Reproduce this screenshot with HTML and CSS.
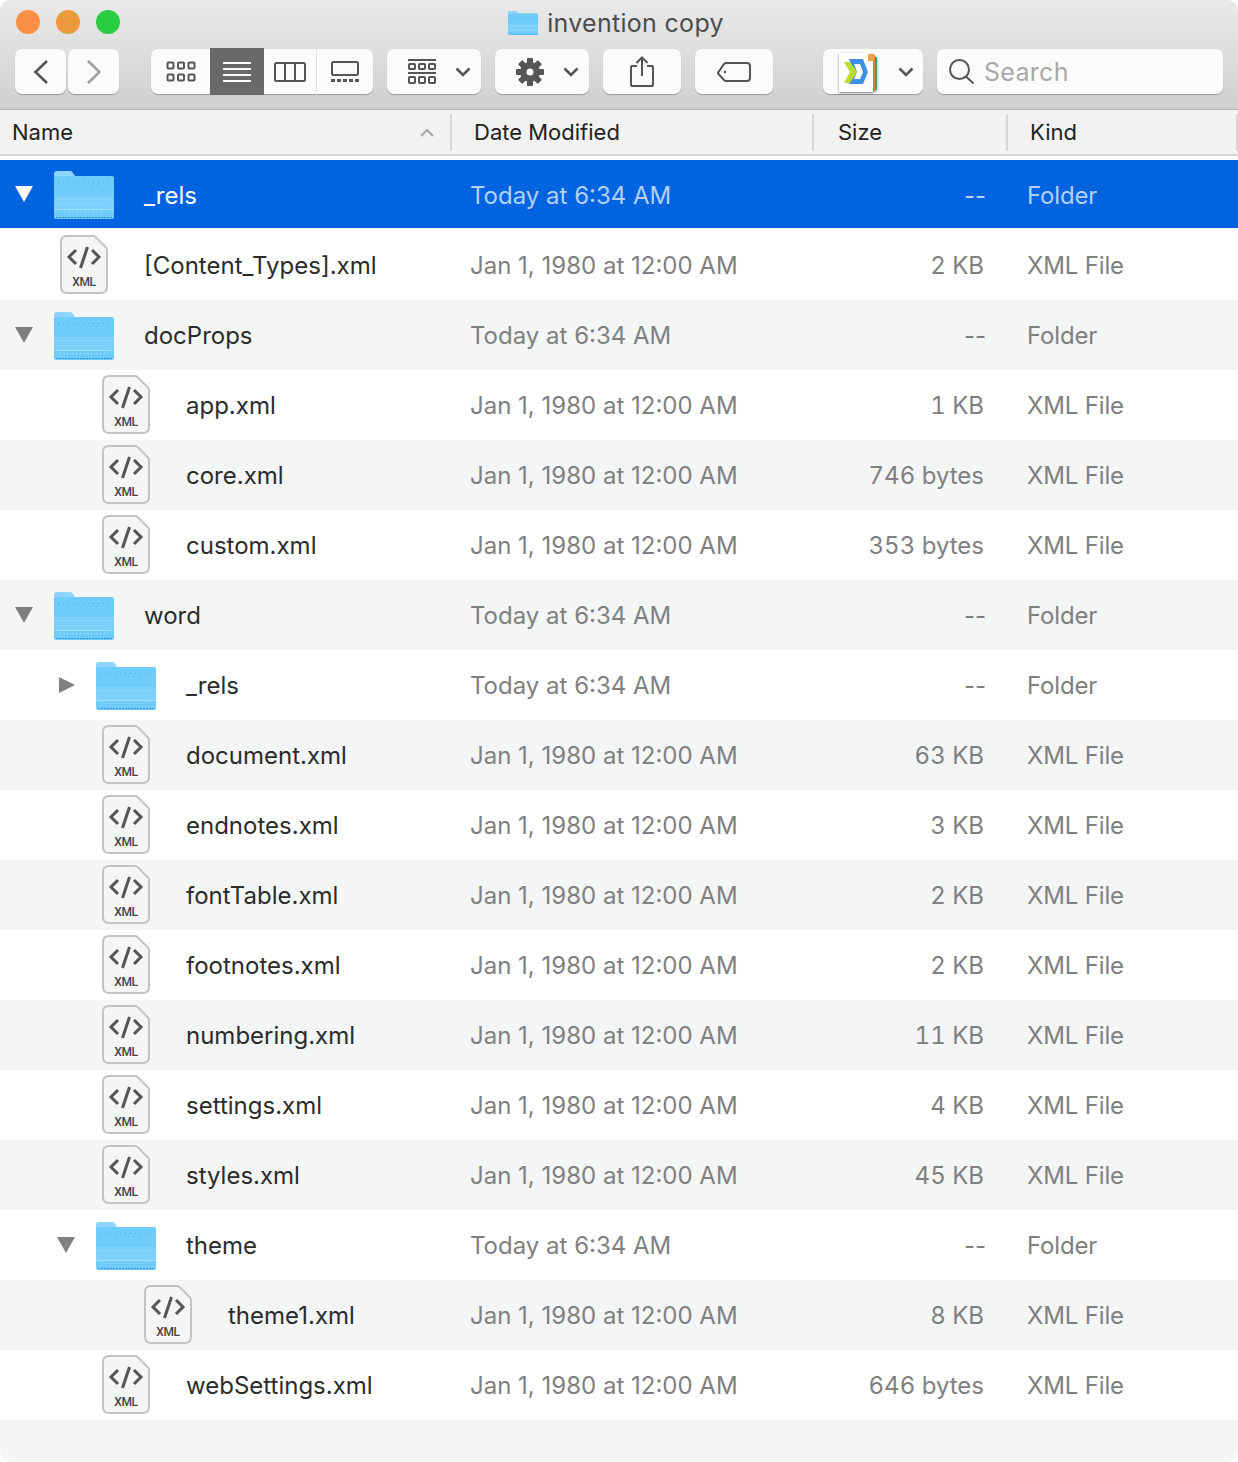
FILE: index.html
```html
<!DOCTYPE html>
<html lang="en">
<head>
  <meta charset="UTF-8">
  <title>invention copy</title>
  <link rel="stylesheet" href="styles.css">
</head>
<body>
  <!-- shared icon shapes -->
  <svg class="defs" width="0" height="0">
    <defs>
      <symbol id="folder" viewBox="0 0 60 48">
        <path d="M0 3q0-3 3-3h13q2 0 3 2l2 3h36q3 0 3 3v37q0 3-3 3H3q-3 0-3-3z" fill="#8dd5fb"/>
        <path d="M0 8q0-3 3-3h54q3 0 3 3v37q0 3-3 3H3q-3 0-3-3z" fill="#6ecbfa"/>
        <rect y="25" width="60" height="13" fill="#7dd0fb"/>
        <rect y="38" width="60" height="1" fill="#a4def9"/>
        <path d="M4 11.500h52M32 14.500h12" stroke="#3f9fec" stroke-width="1" stroke-dasharray="1 4" opacity=".7"/>
        <path d="M2 28.500h56M4 33.500h52M6 41.500h48" stroke="#a8e2fc" stroke-width="1" stroke-dasharray="1 3"/>
        <path d="M2 46.500h56" stroke="#2f93e6" stroke-width="1" stroke-dasharray="2 1"/>
      </symbol>
      <symbol id="xml" viewBox="0 0 48 59">
        <path d="M7 1h26q1.500 0 2.500 1L46 12.500q1 1 1 2.500v37q0 6-6 6H7q-6 0-6-6V7q0-6 6-6z" fill="#f5f5f5" stroke="#c3c3c3" stroke-width="2"/>
        <path d="M16 15l-7 7 7 7M32 15l7 7-7 7" fill="none" stroke="#555" stroke-width="3"/>
        <path d="M27.500 12l-7 21" fill="none" stroke="#555" stroke-width="3"/>
      </symbol>
      <symbol id="chev" viewBox="0 0 16 10">
        <path d="M1.500 1.500L8 8l6.500-6.500" fill="none" stroke="#555" stroke-width="2.600"/>
      </symbol>
    </defs>
  </svg>

  <div class="window">
    <header class="chrome">
      <div class="titlebar">
        <div class="lights">
          <span class="light orange"></span>
          <span class="light amber"></span>
          <span class="light green"></span>
        </div>
        <div class="title">
          <svg class="title-icon"><use href="#folder"/></svg>
          <span>invention copy</span>
        </div>
      </div>

      <div class="toolbar">
        <div class="nav">
          <div class="btn nav-btn">
            <svg width="16" height="24" viewBox="0 0 16 24"><path d="M14 1L2.500 12 14 23" fill="none" stroke="#555" stroke-width="2.600"/></svg>
          </div>
          <div class="btn nav-btn">
            <svg width="16" height="24" viewBox="0 0 16 24"><path d="M2 1l11.500 11L2 23" fill="none" stroke="#a0a0a0" stroke-width="2.600"/></svg>
          </div>
        </div>

        <div class="btn views">
          <div class="view view-icon">
            <svg width="30" height="22" viewBox="0 0 30 22" fill="none" stroke="#555" stroke-width="2">
              <rect x="1.500" y="1.500" width="6" height="6" rx="1"/><rect x="12" y="1.500" width="6" height="6" rx="1"/><rect x="22.500" y="1.500" width="6" height="6" rx="1"/>
              <rect x="1.500" y="13.500" width="6" height="6" rx="1"/><rect x="12" y="13.500" width="6" height="6" rx="1"/><rect x="22.500" y="13.500" width="6" height="6" rx="1"/>
            </svg>
          </div>
          <div class="view view-list">
            <svg width="28" height="20" viewBox="0 0 28 20" fill="none" stroke="#fff" stroke-width="2"><path d="M0 1h28M0 7h28M0 13h28M0 19h28"/></svg>
          </div>
          <div class="view view-col">
            <svg width="32" height="20" viewBox="0 0 32 20" fill="none" stroke="#555" stroke-width="2"><rect x="1" y="1" width="30" height="18" rx="1.500"/><path d="M11 1v18M21 1v18"/></svg>
          </div>
          <div class="view view-gal">
            <svg width="28" height="21" viewBox="0 0 28 21" fill="none" stroke="#555" stroke-width="2"><rect x="1" y="1" width="26" height="13" rx="1.500"/><path d="M0 19.500h28" stroke-width="3" stroke-dasharray="4 2"/></svg>
          </div>
        </div>

        <div class="btn drop">
          <svg width="28" height="26" viewBox="0 0 28 26" fill="none" stroke="#555" stroke-width="2">
            <path d="M0 1h28M0 14h28"/>
            <rect x="1" y="5" width="6" height="5" rx=".8"/><rect x="11" y="5" width="6" height="5" rx=".8"/><rect x="21" y="5" width="6" height="5" rx=".8"/>
            <rect x="1" y="18" width="6" height="6" rx=".8"/><rect x="11" y="18" width="6" height="6" rx=".8"/><rect x="21" y="18" width="6" height="6" rx=".8"/>
          </svg>
          <svg class="chev"><use href="#chev"/></svg>
        </div>

        <div class="btn drop">
          <svg width="28" height="28" viewBox="0 0 28 28">
            <g fill="#555">
              <rect x="11" y="0" width="6" height="28" rx="1"/>
              <rect x="11" y="0" width="6" height="28" rx="1" transform="rotate(45 14 14)"/>
              <rect x="11" y="0" width="6" height="28" rx="1" transform="rotate(90 14 14)"/>
              <rect x="11" y="0" width="6" height="28" rx="1" transform="rotate(135 14 14)"/>
              <circle cx="14" cy="14" r="10"/>
            </g>
            <circle cx="14" cy="14" r="3.500" fill="#fbfbfb"/>
          </svg>
          <svg class="chev"><use href="#chev"/></svg>
        </div>

        <div class="btn share">
          <svg width="24" height="31" viewBox="0 0 24 31" fill="none" stroke="#555" stroke-width="2">
            <path d="M7 10H2q-1 0-1 1v18q0 1 1 1h20q1 0 1-1V11q0-1-1-1h-5"/>
            <path d="M12 20V2M6.500 7L12 1.500 17.500 7"/>
          </svg>
        </div>

        <div class="btn tag">
          <svg width="34" height="20" viewBox="0 0 34 20" fill="none" stroke="#555" stroke-width="2">
            <path d="M9 1h21q3 0 3 3v12q0 3-3 3H9q-1 0-2-1l-5.500-6q-1-1 0-2L7 2q1-1 2-1z"/>
            <circle cx="8" cy="10" r="1.200" fill="#555" stroke="none"/>
          </svg>
        </div>

        <div class="btn dropbox">
          <svg class="app-icon" width="40" height="42" viewBox="0 0 40 42">
            <rect x="34" y="3" width="3" height="36" fill="#e0813a"/>
            <rect x="37" y="5" width="2" height="33" fill="#4f9e5b"/>
            <rect x="30" y="2" width="6" height="7" fill="#f0a24a"/>
            <path d="M1 1h29v8h5v31H1z" fill="#fff"/>
            <path d="M11 7h14l5 13-5 12H11l5-12z" fill="#3f8fe6"/>
            <path d="M16 12h6l3 8-3 7h-6l3-7z" fill="#fff"/>
            <path d="M6 10h6l7 10-7 11H6l6-11z" fill="#b7dc2a"/>
            <path d="M12 32h13l3-7 2-5-5 12z" fill="#1f6fd0"/>
          </svg>
          <svg class="chev"><use href="#chev"/></svg>
        </div>

        <div class="btn search">
          <svg width="26" height="25" viewBox="0 0 26 25" fill="none" stroke="#555" stroke-width="2"><circle cx="10.500" cy="10.500" r="9.500"/><path d="M17 17.500l7.500 7"/></svg>
          <span>Search</span>
        </div>
      </div>
    </header>

    <div class="columns">
      <div class="col col-name">
        <span>Name</span>
        <svg class="sort" width="14" height="9" viewBox="0 0 14 9"><path d="M1 8l6-6 6 6" fill="none" stroke="#a8a8a8" stroke-width="2.200"/></svg>
      </div>
      <div class="col col-date">Date Modified</div>
      <div class="col col-size">Size</div>
      <div class="col col-kind">Kind</div>
    </div>

    <div class="list">
      <div class="row selected lvl0">
        <div class="name"><span class="tri down"></span><svg class="folder"><use href="#folder"/></svg><span class="label">_rels</span></div>
        <div>Today at 6:34 AM</div><div class="size dash">--</div><div class="kind">Folder</div>
      </div>
      <div class="row lvl0">
        <div class="name"><span class="tri"></span><div class="doc"><svg><use href="#xml"/></svg><span>XML</span></div><span class="label">[Content_Types].xml</span></div>
        <div>Jan 1, 1980 at 12:00 AM</div><div class="size">2 KB</div><div class="kind">XML File</div>
      </div>
      <div class="row lvl0">
        <div class="name"><span class="tri down"></span><svg class="folder"><use href="#folder"/></svg><span class="label">docProps</span></div>
        <div>Today at 6:34 AM</div><div class="size dash">--</div><div class="kind">Folder</div>
      </div>
      <div class="row lvl1">
        <div class="name"><span class="tri"></span><div class="doc"><svg><use href="#xml"/></svg><span>XML</span></div><span class="label">app.xml</span></div>
        <div>Jan 1, 1980 at 12:00 AM</div><div class="size">1 KB</div><div class="kind">XML File</div>
      </div>
      <div class="row lvl1">
        <div class="name"><span class="tri"></span><div class="doc"><svg><use href="#xml"/></svg><span>XML</span></div><span class="label">core.xml</span></div>
        <div>Jan 1, 1980 at 12:00 AM</div><div class="size">746 bytes</div><div class="kind">XML File</div>
      </div>
      <div class="row lvl1">
        <div class="name"><span class="tri"></span><div class="doc"><svg><use href="#xml"/></svg><span>XML</span></div><span class="label">custom.xml</span></div>
        <div>Jan 1, 1980 at 12:00 AM</div><div class="size">353 bytes</div><div class="kind">XML File</div>
      </div>
      <div class="row lvl0">
        <div class="name"><span class="tri down"></span><svg class="folder"><use href="#folder"/></svg><span class="label">word</span></div>
        <div>Today at 6:34 AM</div><div class="size dash">--</div><div class="kind">Folder</div>
      </div>
      <div class="row lvl1">
        <div class="name"><span class="tri right"></span><svg class="folder"><use href="#folder"/></svg><span class="label">_rels</span></div>
        <div>Today at 6:34 AM</div><div class="size dash">--</div><div class="kind">Folder</div>
      </div>
      <div class="row lvl1">
        <div class="name"><span class="tri"></span><div class="doc"><svg><use href="#xml"/></svg><span>XML</span></div><span class="label">document.xml</span></div>
        <div>Jan 1, 1980 at 12:00 AM</div><div class="size">63 KB</div><div class="kind">XML File</div>
      </div>
      <div class="row lvl1">
        <div class="name"><span class="tri"></span><div class="doc"><svg><use href="#xml"/></svg><span>XML</span></div><span class="label">endnotes.xml</span></div>
        <div>Jan 1, 1980 at 12:00 AM</div><div class="size">3 KB</div><div class="kind">XML File</div>
      </div>
      <div class="row lvl1">
        <div class="name"><span class="tri"></span><div class="doc"><svg><use href="#xml"/></svg><span>XML</span></div><span class="label">fontTable.xml</span></div>
        <div>Jan 1, 1980 at 12:00 AM</div><div class="size">2 KB</div><div class="kind">XML File</div>
      </div>
      <div class="row lvl1">
        <div class="name"><span class="tri"></span><div class="doc"><svg><use href="#xml"/></svg><span>XML</span></div><span class="label">footnotes.xml</span></div>
        <div>Jan 1, 1980 at 12:00 AM</div><div class="size">2 KB</div><div class="kind">XML File</div>
      </div>
      <div class="row lvl1">
        <div class="name"><span class="tri"></span><div class="doc"><svg><use href="#xml"/></svg><span>XML</span></div><span class="label">numbering.xml</span></div>
        <div>Jan 1, 1980 at 12:00 AM</div><div class="size">11 KB</div><div class="kind">XML File</div>
      </div>
      <div class="row lvl1">
        <div class="name"><span class="tri"></span><div class="doc"><svg><use href="#xml"/></svg><span>XML</span></div><span class="label">settings.xml</span></div>
        <div>Jan 1, 1980 at 12:00 AM</div><div class="size">4 KB</div><div class="kind">XML File</div>
      </div>
      <div class="row lvl1">
        <div class="name"><span class="tri"></span><div class="doc"><svg><use href="#xml"/></svg><span>XML</span></div><span class="label">styles.xml</span></div>
        <div>Jan 1, 1980 at 12:00 AM</div><div class="size">45 KB</div><div class="kind">XML File</div>
      </div>
      <div class="row lvl1">
        <div class="name"><span class="tri down"></span><svg class="folder"><use href="#folder"/></svg><span class="label">theme</span></div>
        <div>Today at 6:34 AM</div><div class="size dash">--</div><div class="kind">Folder</div>
      </div>
      <div class="row lvl2">
        <div class="name"><span class="tri"></span><div class="doc"><svg><use href="#xml"/></svg><span>XML</span></div><span class="label">theme1.xml</span></div>
        <div>Jan 1, 1980 at 12:00 AM</div><div class="size">8 KB</div><div class="kind">XML File</div>
      </div>
      <div class="row lvl1">
        <div class="name"><span class="tri"></span><div class="doc"><svg><use href="#xml"/></svg><span>XML</span></div><span class="label">webSettings.xml</span></div>
        <div>Jan 1, 1980 at 12:00 AM</div><div class="size">646 bytes</div><div class="kind">XML File</div>
      </div>
    </div>
  </div>
</body>
</html>
```

FILE: styles.css
```css
/* Reset + base */
* { margin:0; padding:0; box-sizing:border-box; }
html, body { height:100%; background:#fff; }
body { font-family:Inter, "Liberation Sans", sans-serif; overflow:hidden; }
.defs { display:block; height:0; }

.window {
  height:1462px;
  display:flex; flex-direction:column;
  border-radius:11px 11px 12px 12px;
  overflow:hidden;
  background:#f4f5f5;
}

/* Title bar + toolbar */
.chrome {
  height:110px;
  background:linear-gradient(#e9e9e9, #e0e0e0 40%, #cfcfcf);
  border-bottom:1px solid #b4b4b4;
}
.titlebar { height:46px; display:flex; align-items:center; padding-left:16px; }
.lights { display:flex; gap:16px; width:120px; margin-top:-2px; }
.light { width:24px; height:24px; border-radius:50%; }
.orange { background:#fd8f44; }
.amber { background:repeating-conic-gradient(#9cc040 0 25%, #ee9a3a 0 100%) 0 0/2px 2px; }
.green { background:#28cd41; }
.title {
  flex:1; display:flex; justify-content:center; align-items:center; gap:9px;
  font-size:25px; letter-spacing:0.3px; color:#4c4c4c;
  padding-right:142px;
}
.title-icon { width:30px; height:24px; }

.toolbar { display:flex; align-items:center; gap:14px; padding:3px 15px 0; }
.btn {
  height:45px;
  display:flex; align-items:center; justify-content:center;
  background:#fbfbfb;
  border-radius:7px;
  box-shadow:0 1px 1px rgba(0,0,0,0.28);
}
.nav { display:flex; gap:2px; margin-right:18px; }
.nav-btn { width:51px; }

.views { width:222px; overflow:visible; }
.view { height:47px; display:flex; align-items:center; justify-content:center; }
.view-icon { width:59px; }
.view-list { width:54px; background:#696969; }
.view-col { width:53px; border-right:1px solid #e2e2e2; }
.view-gal { width:56px; }

.drop { width:94px; gap:19px; justify-content:flex-start; padding-left:21px; }
.chev { width:16px; height:10px; }
.share { width:78px; }
.tag { width:78px; }
.dropbox { width:100px; margin-left:36px; gap:20px; justify-content:flex-start; padding-left:15px; }
.app-icon { margin-top:3px; filter:drop-shadow(0 1px 1px rgba(0,0,0,0.5)); }
.search {
  flex:1; justify-content:flex-start; gap:9px; padding-left:12px;
  font-size:25px; letter-spacing:0.3px; color:#a9a9a9;
}

/* Column headers */
.columns {
  height:46px;
  display:grid; grid-template-columns:452px 362px 194px 1fr;
  background:#f2f2f2;
  border-bottom:2px solid #d4d4d4;
  font-size:22px; color:#222;
  align-items:center;
}
.col { height:37px; display:flex; align-items:center; border-right:2px solid #d6d6d6; }
.col-name { padding:0 16px 0 12px; justify-content:space-between; }
.col-date { padding-left:22px; }
.col-size { padding-left:24px; }
.col-kind { padding-left:22px; }

/* File list */
.list { flex:1; padding-top:4px; background:#fff; display:flex; flex-direction:column; }
.list::after { content:""; flex:1; background:#f4f5f5; }
.row {
  height:70px; flex:none;
  display:grid; grid-template-columns:470px 301px 213px 1fr;
  align-items:center;
  font-size:24px; color:#808080;
  background:#fff;
}
.row:nth-child(odd) { background:#f4f5f5; }
.row.selected {
  height:68px; margin-bottom:2px;
  background:#0064e1; color:#b3d0f6;
}
.row.selected > div:not(.name), .row.selected .label { padding-top:2px; }
.row.selected .label { color:#fff; }
.name { display:flex; align-items:center; }
.lvl0 .name { padding-left:15px; }
.lvl1 .name { padding-left:57px; }
.lvl2 .name { padding-left:99px; }
.label { color:#2b2b2b; margin-left:30px; }
.size { text-align:right; font-feature-settings:"tnum"; }
.size.dash { font-feature-settings:normal; margin-right:-2px; }
.kind { padding-left:43px; letter-spacing:-0.15px; }

.tri { width:18px; height:16px; margin-right:21px; flex:none; }
.tri.down { background:#808080; clip-path:polygon(0 0, 100% 0, 50% 100%); }
.tri.right { background:#808080; clip-path:polygon(11% 0, 100% 50%, 11% 100%); }
.selected .tri.down { background:#fff; }

.folder { width:60px; height:48px; flex:none; margin-top:2px; }

.doc { position:relative; width:48px; height:59px; margin:-2px 6px 0; flex:none; }
.doc svg { width:48px; height:59px; display:block; }
.doc span {
  position:absolute; left:0; right:0; top:40px;
  text-align:center;
  font:500 12px Roboto, sans-serif; letter-spacing:-0.4px;
  color:#444;
}
```
